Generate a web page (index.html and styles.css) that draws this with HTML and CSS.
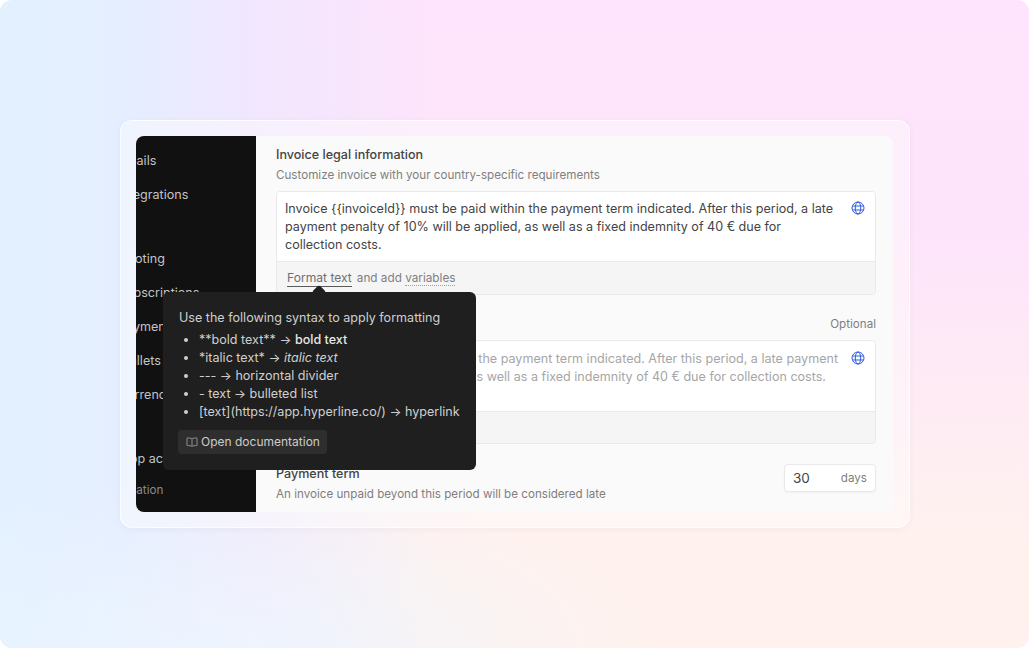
FILE: index.html
```html
<!DOCTYPE html>
<html lang="en">

<head>
    <meta charset="UTF-8">
    <meta name="viewport" content="width=device-width, initial-scale=1.0">
    <title>Invoice settings</title>
    <link rel="stylesheet" href="styles.css">
</head>

<body>
    <div class="frame">
        <div class="screen">
            <nav class="sidebar">
                <a class="nav-item">Emails</a>
                <a class="nav-item">Integrations</a>
                <a class="nav-item nav-gap">Quoting</a>
                <a class="nav-item">Subscriptions</a>
                <a class="nav-item">Payments</a>
                <a class="nav-item">Wallets</a>
                <a class="nav-item">Currencies</a>
                <a class="nav-item nav-gap">Stop actions</a>
                <a class="nav-item nav-dim">Location</a>
            </nav>

            <main class="content">
                <section class="field">
                    <h2 class="field-title">Invoice legal information</h2>
                    <p class="field-help">Customize invoice with your country-specific requirements</p>
                    <div class="editor">
                        <div class="editor-body">
                            <p class="editor-text">Invoice {{invoiceId}} must be paid within the payment term indicated. After this period, a late payment penalty of 10% will be applied, as well as a fixed indemnity of 40 € due for collection costs.</p>
                            <svg class="globe" viewBox="0 0 14 14"><use href="#globe-icon"></use></svg>
                        </div>
                        <div class="editor-foot">
                            <span class="format-link">Format text</span>
                            <span>and add <span class="variables-link">variables</span></span>
                        </div>
                    </div>
                </section>

                <section class="field field-second">
                    <div class="field-head">
                        <h2 class="field-title">Invoice legal information</h2>
                        <span class="optional">Optional</span>
                    </div>
                    <div class="editor">
                        <div class="editor-body">
                            <p class="editor-text editor-placeholder">Invoice {{i}} must be paid within the payment term indicated. After this period, a late payment penalty of 10% will be applied, as well as a fixed indemnity of 40 € due for collection costs.</p>
                            <svg class="globe" viewBox="0 0 14 14"><use href="#globe-icon"></use></svg>
                        </div>
                        <div class="editor-foot">
                            <span class="format-link">Format text</span>
                            <span>and add <span class="variables-link">variables</span></span>
                        </div>
                    </div>
                </section>

                <section class="term">
                    <div class="term-text">
                        <h2 class="field-title">Payment term</h2>
                        <p class="field-help">An invoice unpaid beyond this period will be considered late</p>
                    </div>
                    <div class="term-input">
                        <span class="term-value">30</span>
                        <span class="term-unit">days</span>
                    </div>
                </section>
            </main>

            <div class="tooltip">
                <p class="tooltip-title">Use the following syntax to apply formatting</p>
                <ul class="tooltip-list">
                    <li>**bold text** → <strong>bold text</strong></li>
                    <li>*italic text* → <em>italic text</em></li>
                    <li>--- → horizontal divider</li>
                    <li>- text → bulleted list</li>
                    <li>[text](https://app.hyperline.co/) → hyperlink</li>
                </ul>
                <a class="doc-button">
                    <svg class="book" viewBox="0 0 12 12" fill="none" stroke="currentColor" stroke-width="1">
                        <path d="M6 2.8C5 2.1 3.4 1.9 1 2v7.6c2.4-.1 4 .1 5 .8 1-.7 2.6-.9 5-.8V2c-2.4-.1-4 .1-5 .8zM6 2.8v7.6"></path>
                    </svg>
                    Open documentation
                </a>
            </div>
        </div>
    </div>

    <svg class="icon-defs" width="0" height="0">
        <symbol id="globe-icon" viewBox="0 0 14 14">
            <g fill="none" stroke="#2f5be0" stroke-width="1">
                <circle cx="7" cy="7" r="6"></circle>
                <ellipse cx="7" cy="7" rx="2.7" ry="6"></ellipse>
                <path d="M1.5 5h11M1.5 9h11"></path>
            </g>
        </symbol>
    </svg>
</body>

</html>
```

FILE: styles.css
```css
* {
    box-sizing: border-box;
}

html {
    background-color: #ffffff;
}

body {
    margin: 0;
    height: 648px;
    overflow: hidden;
    padding: 120px 0 0 120px;
    border-radius: 12px;
    font-family: Inter, "Liberation Sans", sans-serif;
    font-size: 12.57px;
    line-height: 18px;
    color: #333333;
    background-image:
        radial-gradient(420px 170px at 22% 100%, rgba(238, 246, 255, 0.85) 0%, rgba(238, 246, 255, 0) 100%),
        linear-gradient(90deg, #e3f1ff 0%, #e5eeff 12%, rgba(236, 232, 255, 0.75) 24%, rgba(250, 236, 252, 0) 42%),
        linear-gradient(180deg, #fee4fc 0%, #fde4fb 35%, #fff2ee 85%);
}

.icon-defs {
    position: absolute;
}

.frame {
    width: 790px;
    height: 408px;
    padding: 15px 16px 15px 15px;
    border: 1px solid rgba(255, 255, 255, 0.75);
    border-radius: 12px;
    background-color: rgba(255, 255, 255, 0.4);
    box-shadow: 0 1px 6px rgba(110, 110, 150, 0.07);
}

.screen {
    position: relative;
    display: flex;
    height: 376px;
    border-radius: 8px;
    background-color: #fafafa;
}

.sidebar {
    flex: 0 0 120px;
    overflow: hidden;
    padding-top: 16px;
    border-radius: 8px 0 0 8px;
    background-color: #111111;
    color: #c4c4c4;
}

.nav-item {
    display: block;
    height: 18px;
    margin: 0 0 16px -18px;
    white-space: nowrap;
}

.nav-gap {
    margin-top: 46px;
}

.nav-dim {
    margin: -3px 0 0 -20px;
    font-size: 11.64px;
    color: #8a8a8a;
}

.content {
    flex: 1;
    min-width: 0;
    overflow: hidden;
    padding: 10px 17px 0 20px;
}

.field-title {
    margin: 0;
    font-size: 12.57px;
    font-weight: 500;
    line-height: 18px;
    color: #444444;
}

.field-help {
    margin: 2px 0 0;
    font-size: 11.64px;
    line-height: 18px;
    color: #7f7f7f;
}

.editor {
    margin-top: 7px;
    border: 1px solid #e9e9e9;
    border-radius: 4px;
    overflow: hidden;
}

.editor-body {
    display: flex;
    justify-content: space-between;
    align-items: flex-start;
    height: 69px;
    padding: 8px 10px 0 8px;
    background-color: #ffffff;
}

.field-second {
    margin-top: 20px;
}

.field-second .editor-body {
    height: 70px;
    padding-top: 9px;
}

.field-second .editor-foot {
    height: 32px;
}

.editor-text {
    margin: 0;
    width: 555px;
    color: #444444;
}

.editor-placeholder {
    color: #a6a6a6;
}

.globe {
    flex: none;
    width: 14px;
    height: 14px;
    margin-top: 1px;
}

.editor-foot {
    display: flex;
    gap: 5px;
    height: 33px;
    padding: 7px 10px 0;
    border-top: 1px solid #e9e9e9;
    background-color: #f5f5f5;
    font-size: 11.75px;
    line-height: 18px;
    color: #7f7f7f;
}

.format-link {
    height: 18px;
    font-size: 12.1px;
    color: #6f6f6f;
    border-bottom: 1px solid #5a5a5a;
}

.variables-link {
    border-bottom: 1px dotted #a0a0a0;
}

.field-head {
    display: flex;
    justify-content: space-between;
    align-items: center;
}

.optional {
    font-size: 11.64px;
    color: #7f7f7f;
}

.term {
    display: flex;
    justify-content: space-between;
    align-items: flex-start;
    margin-top: 20px;
}

.term-text {
    padding-top: 1px;
}

.term-input {
    display: flex;
    justify-content: space-between;
    align-items: center;
    width: 92px;
    height: 28px;
    padding: 0 8px;
    border: 1px solid #e9e9e9;
    border-radius: 4px;
    background-color: #ffffff;
    box-shadow: 0 1px 2px rgba(0, 0, 0, 0.04);
}

.term-value {
    font-size: 13.5px;
    color: #444444;
}

.term-unit {
    font-size: 11.64px;
    color: #7f7f7f;
}

.tooltip {
    position: absolute;
    left: 27px;
    top: 156px;
    width: 313px;
    height: 178px;
    padding: 17px 16px 16px;
    border-radius: 6px;
    background-color: #1f1f1f;
    color: #cfcfcf;
}

.tooltip::before {
    content: "";
    position: absolute;
    left: 151px;
    top: -5px;
    width: 10px;
    height: 10px;
    border-radius: 2px;
    background-color: #1f1f1f;
    transform: rotate(45deg);
}

.tooltip-title {
    margin: 0;
}

.tooltip-list {
    margin: 4px 0 9px;
    padding: 0 0 0 20px;
}

.tooltip-list strong {
    font-weight: 500;
    color: #e6e6e6;
}

.doc-button {
    display: flex;
    align-items: center;
    gap: 3px;
    width: 149px;
    height: 24px;
    margin-left: -1px;
    padding-left: 8px;
    border-radius: 4px;
    background-color: #2e2e2e;
    font-size: 12px;
    color: #cccccc;
}

.book {
    width: 12px;
    height: 12px;
    color: #8c8c8c;
}
```
